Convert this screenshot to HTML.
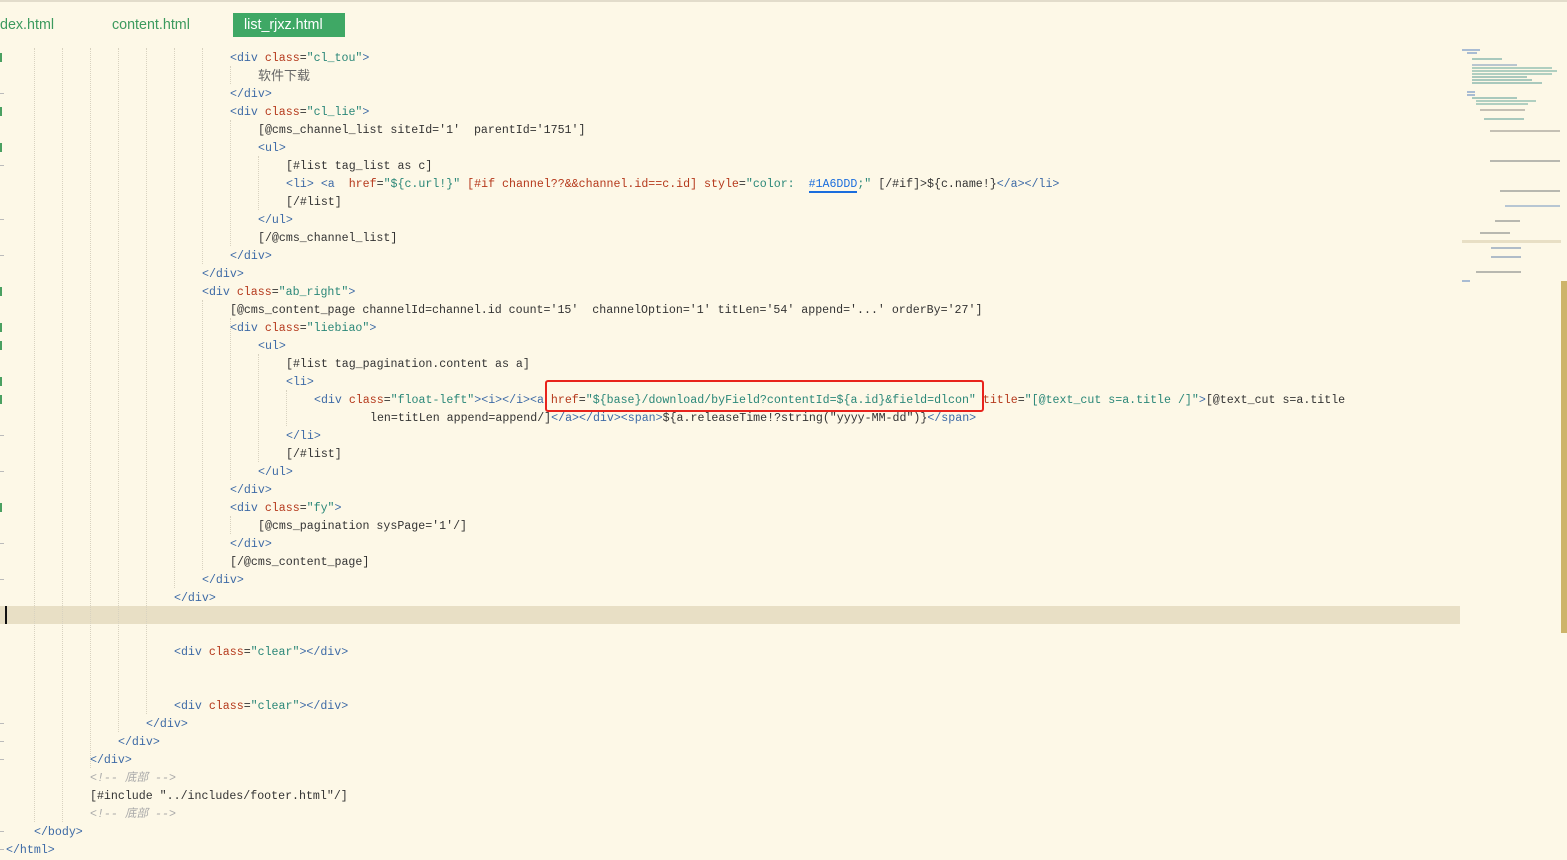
<!DOCTYPE html>
<html><head><meta charset="utf-8"><style>
html,body{margin:0;padding:0}
body{width:1567px;height:859px;background:#fdf8e7;position:relative;overflow:hidden;font-family:"Liberation Mono","Noto Sans CJK SC",monospace;font-size:11.62px;color:#333}
.topline{position:absolute;left:0;top:0;width:1567px;height:2px;background:#e2dccb}
.tab{position:absolute;top:13px;height:24px;line-height:25px;font-family:"Liberation Sans",sans-serif;font-size:14.3px;color:#3c9a5e}
.tab.on{background:#3fa865;color:#fff;padding-left:11px;width:101px}
.l{position:absolute;white-space:pre;height:18px;line-height:18px;margin-top:2px}
.t{color:#3d6aa6}.a{color:#b5391c}.s{color:#2a8778}.c{color:#aaa;font-style:italic}.g{color:#666}
.guide{position:absolute;width:0;border-left:1px dotted #d8d2c0}
.hl{position:absolute;left:0;top:606px;width:1460px;height:18px;background:#e8dfc5}
.cur{position:absolute;left:5px;top:606px;width:2px;height:18px;background:#111}
.box{position:absolute;left:545px;top:380px;width:435px;height:28px;border:2px solid #e8231c;border-radius:3px}
.gm{position:absolute;left:0;width:2px;height:9px;background:#4aa061}
.dm{position:absolute;left:0;width:4px;height:1px;background:#bbb}
.sb{position:absolute;left:1561px;top:281px;width:6px;height:352px;background:#cdb46a}
.mm{position:absolute;height:2px}
</style></head><body>
<div class="topline"></div>
<div class="tab" style="left:0">dex.html</div>
<div class="tab" style="left:112px">content.html</div>
<div class="tab on" style="left:233px">list_rjxz.html</div>

<div class="hl"></div><div class="cur"></div>

<div class="guide" style="left:34px;top:48px;height:774px"></div>
<div class="guide" style="left:62px;top:48px;height:774px"></div>
<div class="guide" style="left:90px;top:48px;height:720px"></div>
<div class="guide" style="left:118px;top:48px;height:684px"></div>
<div class="guide" style="left:146px;top:48px;height:666px"></div>
<div class="guide" style="left:174px;top:48px;height:540px"></div>
<div class="guide" style="left:202px;top:48px;height:216px"></div>
<div class="guide" style="left:202px;top:300px;height:270px"></div>
<div class="guide" style="left:230px;top:66px;height:18px"></div>
<div class="guide" style="left:230px;top:120px;height:126px"></div>
<div class="guide" style="left:230px;top:318px;height:162px"></div>
<div class="guide" style="left:230px;top:516px;height:18px"></div>
<div class="guide" style="left:258px;top:156px;height:54px"></div>
<div class="guide" style="left:258px;top:354px;height:108px"></div>
<div class="guide" style="left:286px;top:390px;height:36px"></div>

<div class="gm" style="top:53px"></div><div class="dm" style="top:93px"></div>
<div class="gm" style="top:107px"></div><div class="gm" style="top:143px"></div>
<div class="dm" style="top:165px"></div><div class="dm" style="top:219px"></div><div class="dm" style="top:255px"></div>
<div class="gm" style="top:287px"></div><div class="gm" style="top:323px"></div><div class="gm" style="top:341px"></div>
<div class="gm" style="top:377px"></div><div class="gm" style="top:395px"></div><div class="dm" style="top:435px"></div>
<div class="dm" style="top:471px"></div><div class="gm" style="top:503px"></div><div class="dm" style="top:543px"></div>
<div class="dm" style="top:579px"></div><div class="dm" style="top:723px"></div><div class="dm" style="top:741px"></div>
<div class="dm" style="top:759px"></div><div class="dm" style="top:831px"></div><div class="dm" style="top:849px"></div>

<div class="l" style="left:230px;top:48px"><span class="t">&lt;div</span> <span class="a">class</span>=<span class="s">"cl_tou"</span><span class="t">&gt;</span></div>
<div class="l g" style="left:258px;top:66px;font-size:13px">软件下载</div>
<div class="l t" style="left:230px;top:84px">&lt;/div&gt;</div>
<div class="l" style="left:230px;top:102px"><span class="t">&lt;div</span> <span class="a">class</span>=<span class="s">"cl_lie"</span><span class="t">&gt;</span></div>
<div class="l" style="left:258px;top:120px">[@cms_channel_list siteId='1'  parentId='1751']</div>
<div class="l t" style="left:258px;top:138px">&lt;ul&gt;</div>
<div class="l" style="left:286px;top:156px">[#list tag_list as c]</div>
<div class="l" style="left:286px;top:174px"><span class="t">&lt;li&gt;</span> <span class="t">&lt;a</span>  <span class="a">href</span>=<span class="s">"${c.url!}"</span> <span class="a">[#if channel??&amp;&amp;channel.id==c.id]</span> <span class="a">style</span>=<span class="s">"color:  <span style="color:#1a6ddd;border-bottom:2px solid #1a6ddd">#1A6DDD</span>;"</span> [/#if]&gt;${c.name!}<span class="t">&lt;/a&gt;&lt;/li&gt;</span></div>
<div class="l" style="left:286px;top:192px">[/#list]</div>
<div class="l t" style="left:258px;top:210px">&lt;/ul&gt;</div>
<div class="l" style="left:258px;top:228px">[/@cms_channel_list]</div>
<div class="l t" style="left:230px;top:246px">&lt;/div&gt;</div>
<div class="l t" style="left:202px;top:264px">&lt;/div&gt;</div>
<div class="l" style="left:202px;top:282px"><span class="t">&lt;div</span> <span class="a">class</span>=<span class="s">"ab_right"</span><span class="t">&gt;</span></div>
<div class="l" style="left:230px;top:300px">[@cms_content_page channelId=channel.id count='15'  channelOption='1' titLen='54' append='...' orderBy='27']</div>
<div class="l" style="left:230px;top:318px"><span class="t">&lt;div</span> <span class="a">class</span>=<span class="s">"liebiao"</span><span class="t">&gt;</span></div>
<div class="l t" style="left:258px;top:336px">&lt;ul&gt;</div>
<div class="l" style="left:286px;top:354px">[#list tag_pagination.content as a]</div>
<div class="l t" style="left:286px;top:372px">&lt;li&gt;</div>
<div class="l" style="left:314px;top:390px"><span class="t">&lt;div</span> <span class="a">class</span>=<span class="s">"float-left"</span><span class="t">&gt;&lt;i&gt;&lt;/i&gt;&lt;a</span> <span class="a">href</span>=<span class="s">"${base}/download/byField?contentId=${a.id}&amp;field=dlcon"</span> <span class="a">title</span>=<span class="s">"[@text_cut s=a.title /]"</span><span class="t">&gt;</span>[@text_cut s=a.title</div>
<div class="l" style="left:370px;top:408px">len=titLen append=append/]<span class="t">&lt;/a&gt;&lt;/div&gt;&lt;span&gt;</span>${a.releaseTime!?string("yyyy-MM-dd")}<span class="t">&lt;/span&gt;</span></div>
<div class="l t" style="left:286px;top:426px">&lt;/li&gt;</div>
<div class="l" style="left:286px;top:444px">[/#list]</div>
<div class="l t" style="left:258px;top:462px">&lt;/ul&gt;</div>
<div class="l t" style="left:230px;top:480px">&lt;/div&gt;</div>
<div class="l" style="left:230px;top:498px"><span class="t">&lt;div</span> <span class="a">class</span>=<span class="s">"fy"</span><span class="t">&gt;</span></div>
<div class="l" style="left:258px;top:516px">[@cms_pagination sysPage='1'/]</div>
<div class="l t" style="left:230px;top:534px">&lt;/div&gt;</div>
<div class="l" style="left:230px;top:552px">[/@cms_content_page]</div>
<div class="l t" style="left:202px;top:570px">&lt;/div&gt;</div>
<div class="l t" style="left:174px;top:588px">&lt;/div&gt;</div>
<div class="l" style="left:174px;top:642px"><span class="t">&lt;div</span> <span class="a">class</span>=<span class="s">"clear"</span><span class="t">&gt;&lt;/div&gt;</span></div>
<div class="l" style="left:174px;top:696px"><span class="t">&lt;div</span> <span class="a">class</span>=<span class="s">"clear"</span><span class="t">&gt;&lt;/div&gt;</span></div>
<div class="l t" style="left:146px;top:714px">&lt;/div&gt;</div>
<div class="l t" style="left:118px;top:732px">&lt;/div&gt;</div>
<div class="l t" style="left:90px;top:750px">&lt;/div&gt;</div>
<div class="l c" style="left:90px;top:768px">&lt;!-- 底部 --&gt;</div>
<div class="l" style="left:90px;top:786px">[#include "../includes/footer.html"/]</div>
<div class="l c" style="left:90px;top:804px">&lt;!-- 底部 --&gt;</div>
<div class="l t" style="left:34px;top:822px">&lt;/body&gt;</div>
<div class="l t" style="left:6px;top:840px">&lt;/html&gt;</div>

<div class="box"></div>

<!-- minimap -->
<div class="mm" style="left:1462px;top:49px;width:18px;background:#a9bcd3"></div>
<div class="mm" style="left:1467px;top:52px;width:10px;background:#a9bcd3"></div>
<div class="mm" style="left:1472px;top:58px;width:30px;background:#a9c9bd"></div>
<div class="mm" style="left:1472px;top:64px;width:45px;background:#b9c6cf"></div>
<div class="mm" style="left:1472px;top:67px;width:80px;background:#b0cfc0"></div>
<div class="mm" style="left:1472px;top:70px;width:85px;background:#b0cfc0"></div>
<div class="mm" style="left:1472px;top:73px;width:80px;background:#b0cfc0"></div>
<div class="mm" style="left:1472px;top:76px;width:55px;background:#a9c9bd"></div>
<div class="mm" style="left:1472px;top:79px;width:60px;background:#a9c9bd"></div>
<div class="mm" style="left:1472px;top:82px;width:70px;background:#a9c9bd"></div>
<div class="mm" style="left:1467px;top:91px;width:8px;background:#a9bcd3"></div>
<div class="mm" style="left:1467px;top:94px;width:8px;background:#a9bcd3"></div>
<div class="mm" style="left:1472px;top:97px;width:45px;background:#a9c9bd"></div>
<div class="mm" style="left:1476px;top:100px;width:60px;background:#b0cfc0"></div>
<div class="mm" style="left:1476px;top:103px;width:52px;background:#b0cfc0"></div>
<div class="mm" style="left:1480px;top:109px;width:45px;background:#c4c0b4"></div>
<div class="mm" style="left:1484px;top:118px;width:40px;background:#a9c9bd"></div>
<div class="mm" style="left:1490px;top:130px;width:70px;background:#c4c0b4"></div>
<div class="mm" style="left:1490px;top:160px;width:70px;background:#b8b8b0"></div>
<div class="mm" style="left:1500px;top:190px;width:60px;background:#b8b8b0"></div>
<div class="mm" style="left:1505px;top:205px;width:55px;background:#b7c6d3"></div>
<div class="mm" style="left:1495px;top:220px;width:25px;background:#b8b8b0"></div>
<div class="mm" style="left:1480px;top:232px;width:30px;background:#b8b8b0"></div>
<div class="mm" style="left:1462px;top:240px;width:99px;height:3px;background:#e8dfc5"></div>
<div class="mm" style="left:1491px;top:247px;width:30px;background:#b0bcc8"></div>
<div class="mm" style="left:1491px;top:256px;width:30px;background:#b0bcc8"></div>
<div class="mm" style="left:1476px;top:271px;width:45px;background:#b8b8b0"></div>
<div class="mm" style="left:1462px;top:280px;width:8px;background:#a9bcd3"></div>
<div class="sb"></div>
</body></html>
